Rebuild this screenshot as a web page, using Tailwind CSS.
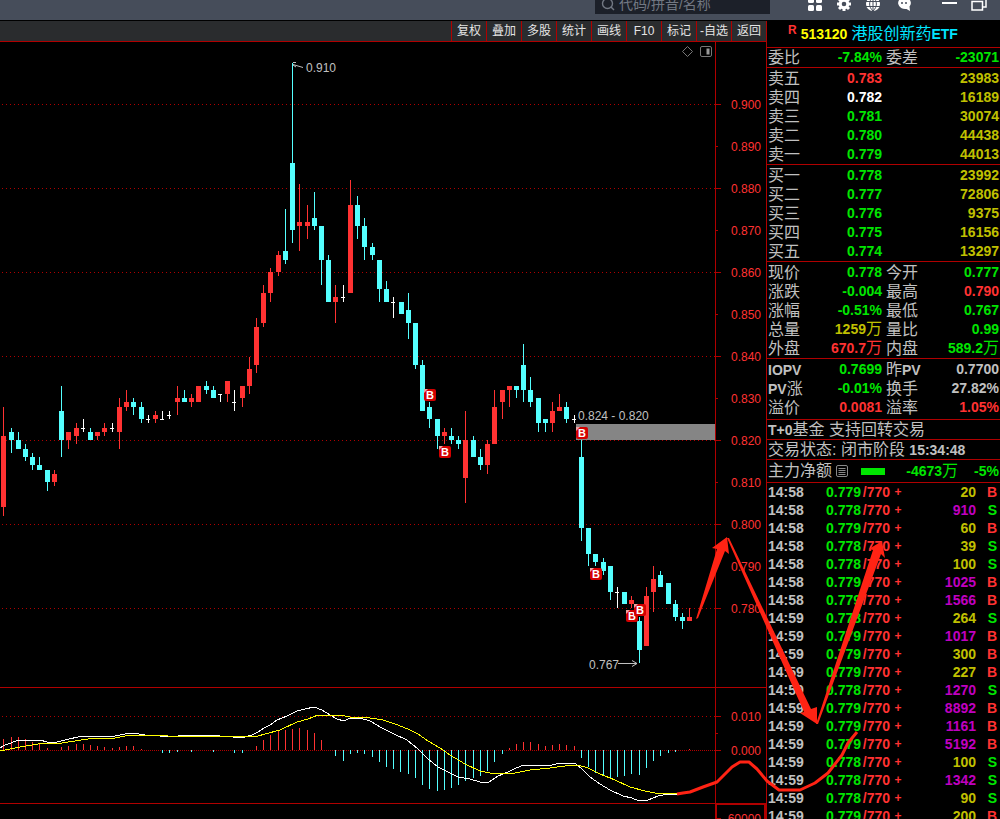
<!DOCTYPE html>
<html lang="zh-CN">
<head>
<meta charset="utf-8">
<title>513120 港股创新药ETF</title>
<script src="https://cdn.jsdelivr.net/npm/@tailwindcss/browser@4"></script>
</head>
<body class="relative flex h-screen flex-col overflow-hidden bg-black font-['Liberation_Sans','Noto_Sans_CJK_SC',sans-serif] text-[#c0c0c0]">

<header class="h-5 shrink-0 overflow-hidden bg-[#464d5a]">
  <div class="-mt-[9px] flex h-[26px] items-center justify-end pr-[13px] text-white">
    <label class="mr-[38px] flex h-[19px] w-[175px] items-center gap-1 bg-[#1c2029] pl-1.5 text-[#727883]">
      <svg class="size-3.5 shrink-0" viewBox="0 0 14 14" fill="none" stroke="currentColor" stroke-width="1.4"><circle cx="6.5" cy="6.5" r="5"/><path d="M10 10l3 3"/></svg>
      <input type="text" aria-label="搜索" placeholder="代码/拼音/名称" class="w-full bg-transparent text-sm outline-none placeholder:text-[#727883]">
    </label>
    <button aria-label="应用" class="mr-[15px]"><svg class="size-3.5" viewBox="0 0 14 14" fill="currentColor"><rect width="6" height="6" rx="1.5"/><rect x="8" width="6" height="6" rx="1.5"/><rect y="8" width="6" height="6" rx="1.5"/><rect x="8" y="8" width="6" height="6" rx="1.5"/></svg></button>
    <button aria-label="设置" class="mr-[15px]"><svg class="size-3.5" viewBox="0 0 14 14"><circle cx="7" cy="7" r="3.8" fill="none" stroke="currentColor" stroke-width="3"/><path stroke="currentColor" stroke-width="3" d="M7 0v2.500M7 11.500V14M0 7h2.500M11.500 7H14M2 2l2 2M10 10l2 2M2 12l2-2M10 4l2-2"/></svg></button>
    <button aria-label="网络" class="mr-[17px]"><svg class="size-3.5" viewBox="0 0 14 14"><circle cx="7" cy="7" r="7" fill="currentColor"/><path d="M0 4.500h14M0 9.500h14M7 0v14M7 0C2.500 4 2.500 10 7 14M7 0c4.500 4 4.500 10 0 14" fill="none" stroke="#464d5a"/></svg></button>
    <button aria-label="消息" class="mr-[31px]"><svg class="size-3.5" viewBox="0 0 14 14"><path d="M7 0a7 6 0 0 1 5.500 9.500L13 14l-3.500-2A7 6 0 1 1 7 0z" fill="currentColor"/><circle cx="5" cy="6" r="1" fill="#464d5a"/><circle cx="9" cy="6" r="1" fill="#464d5a"/></svg></button>
    <button aria-label="最小化" class="mr-3.5"><svg class="h-3.5 w-[15px]" viewBox="0 0 15 14"><rect y="5" width="15" height="2" fill="currentColor"/></svg></button>
    <button aria-label="还原"><svg class="h-3.5 w-4" viewBox="0 0 16 14" fill="none" stroke="currentColor" stroke-width="1.500"><path d="M1 4.500h10.500v8.500H1zM4 3V1h11v9h-3"/></svg></button>
  </div>
</header>

<main class="mt-px flex min-h-0 flex-1">
  <section class="flex min-w-0 flex-1 flex-col">
    <nav class="flex h-[21px] shrink-0 justify-end border-b border-[#b00000] bg-[#2a2c2e] text-xs text-[#e4e4e4]">
      <button class="w-[35px] border-l border-[#b00000]">复权</button>
      <button class="w-[35px] border-l border-[#b00000]">叠加</button>
      <button class="w-[35px] border-l border-[#b00000]">多股</button>
      <button class="w-[35px] border-l border-[#b00000]">统计</button>
      <button class="w-[35px] border-l border-[#b00000]">画线</button>
      <button class="w-[35px] border-l border-[#b00000]">F10</button>
      <button class="w-[35px] border-l border-[#b00000]">标记</button>
      <button class="w-[35px] border-l border-[#b00000] whitespace-nowrap">-自选</button>
      <button class="w-[35px] border-l border-[#b00000]">返回</button>
    </nav>
    <svg id="chart" class="min-h-0 w-full flex-1 text-xs" viewBox="0 42 766 777" preserveAspectRatio="xMinYMin slice" role="img" aria-label="日K线与MACD">
      <g id="grid" shape-rendering="crispEdges"></g>
      <g id="candles" shape-rendering="crispEdges"></g>
      <g id="macd" shape-rendering="crispEdges"></g>
      <g id="marks"></g>
      <g fill="none" stroke="#c0c0c0">
        <path d="M293 62.500h3M293 64.500l10 3M293 65l3 2"/>
        <path d="M618 663.500h19M632 660.500l5 3l-5 3"/>
      </g>
      <g fill="none" stroke="#777">
        <path d="M687.500 46.500l5 5l-5 5l-5-5z"/>
        <rect x="700.500" y="46.500" width="11" height="10" rx="1.500"/>
        <path d="M708 48.500v6" stroke-width="3" stroke="#999"/>
      </g>
    </svg>
  </section>

  <aside class="w-[234px] shrink-0 overflow-hidden whitespace-nowrap border-l border-[#b00000]">
    <h1 class="flex h-[26px] items-center pl-[21px] text-sm font-bold">
      <span class="mb-2 text-xs text-[#ff3232]">R</span>
      <span class="ml-1 text-[#ffff00]">513120</span>
      <span class="ml-1 text-base font-normal text-[#00e5ff]">港股创新药<b class="text-sm">ETF</b></span>
    </h1>
    <div id="quotes"></div>
    <p class="h-5 border-t border-[#b00000] pl-px text-base leading-[19px]"><b class="text-sm">T+0</b>基金 支持回转交易</p>
    <p class="h-5 border-t border-[#b00000] pl-px text-base leading-[19px]">交易状态: 闭市阶段 <b class="text-sm">15:34:48</b></p>
    <div class="flex h-[23px] items-center border-t border-[#b00000] pl-px pr-px text-sm font-bold text-[#00e600]">
      <span class="text-base font-normal text-[#c0c0c0]">主力净额</span>
      <svg class="ml-1 size-3" viewBox="0 0 12 12" fill="none" stroke="#888"><rect x=".5" y=".5" width="11" height="11" rx="1.500"/><path d="M2.500 3.500h7M2.500 5.500h7M2.500 7.500h7M2.500 9.500h7"/></svg>
      <span class="ml-[13px] h-[7px] w-6 bg-[#00e600]"></span>
      <span class="ml-auto">-4673<span class="text-base font-normal leading-none">万</span></span>
      <span class="ml-4">-5%</span>
    </div>
    <div class="border-t border-[#b00000]">
      <table class="w-full table-fixed text-sm font-bold">
        <colgroup><col class="w-[39px]"><col class="w-[55px]"><col class="w-[29px]"><col class="w-[16px]"><col><col class="w-6"></colgroup>
        <tbody id="ticks"></tbody>
      </table>
    </div>
  </aside>
</main>

<!-- Hand-drawn forecast over the chart and the quote panel -->
<svg class="pointer-events-none absolute inset-0 size-full" viewBox="0 0 1000 819" preserveAspectRatio="xMinYMin slice" fill="#ff2314">
  <path d="M696 619L717 549L712 548L727 537L729 554L725 551L698 618z"/>
  <path d="M727 538L804 712L800 713L817 724L817 707L811 709L729 538z"/>
  <path d="M816 724L873 550L869 549L882 541L885 558L881 554L818 724z"/>
  <path d="M677 794L683 793L690 792L703 787L717 782L723 776L732 767L740 762L749 762L757 769L767 781L779 790L800 790L815 783L828 773L842 755L848 743L857 732" fill="none" stroke="#ff2314" stroke-width="3" stroke-linejoin="round"/>
</svg>

<script>
const NS = 'http://www.w3.org/2000/svg';
const byId = id => document.getElementById(id);
function add(parent, tag, attrs, text) {
  const e = document.createElementNS(NS, tag);
  for (const k in attrs) e.setAttribute(k, attrs[k]);
  if (text) e.textContent = text;
  parent.appendChild(e);
}
const RED = '#ff3232', CYAN = '#54ffff', LINE = '#b00000';
const grid = byId('grid'), candles = byId('candles'), macd = byId('macd'), marks = byId('marks');

// Grid, frame and axis
for (const y of [104, 188, 272, 356, 440, 524, 608, 716])
  add(grid, 'path', {d: `M2 ${y}.5H715`, stroke: LINE, 'stroke-dasharray': '1 3'});
add(grid, 'path', {d: 'M0 750.5H715', stroke: LINE, 'stroke-dasharray': '1 1'});
add(grid, 'rect', {x: 715, y: 42, width: 1, height: 777, fill: LINE});
add(grid, 'rect', {x: 0, y: 687, width: 766, height: 1, fill: LINE});
add(grid, 'rect', {x: 0, y: 803, width: 766, height: 1, fill: LINE});
add(grid, 'path', {d: 'M716 819V804H765V819', stroke: LINE, fill: 'none', 'stroke-width': 2});
['0.900','0.890','0.880','0.870','0.860','0.850','0.840','0.830','0.820','0.810','0.800','0.790','0.780'].forEach((t, i) => {
  const y = 104 + i * 42;
  add(grid, 'path', {d: `M716 ${y}.5h${i % 2 ? 2 : 5}`, stroke: LINE});
  add(grid, 'text', {x: 761, y: y + 5, fill: RED, 'text-anchor': 'end'}, t);
});
[[716, '0.010'], [750, '0.000'], [818, '60000']].forEach(([y, t]) => {
  add(grid, 'path', {d: `M716 ${y}.5h5`, stroke: LINE});
  add(grid, 'text', {x: 761, y: y + 5, fill: RED, 'text-anchor': 'end'}, t);
});
add(grid, 'path', {d: 'M716 733.5h2', stroke: LINE});

// x, high, body top, body bottom, low
const data = `3r407,436,507,516 11c428,432,440,453 18c432,440,449,449 25c444,449,457,461 32c453,457,465,470 39c457,465,470,470 47c470,470,482,491 54r470,474,482,486 61c386,411,440,457 68r432,432,440,449 76r423,428,436,444 83w419,428,428,432 90c428,432,440,440 97r432,432,436,440 104r423,428,432,436 112w423,428,428,432 119r398,407,432,449 126r390,402,407,411 133c398,402,407,415 141c402,407,419,423 148w415,419,419,423 155r411,415,419,423 162w411,419,419,420 169w411,415,415,419 177r386,398,402,415 184c390,398,402,402 191r394,398,402,407 198r386,386,402,402 206c381,386,390,394 213c386,390,398,398 220w394,394,394,402 227r381,381,394,402 234w390,402,402,411 242r386,386,398,407 249r357,369,386,394 256r318,327,365,373 263r285,293,323,327 270r268,272,293,302 278r251,255,272,276 285c209,251,260,264 292c63,163,230,243 299r184,222,226,251 307r205,222,226,239 314c192,218,226,230 321c226,226,260,285 328c255,260,302,302 335r285,297,302,323 343w285,297,297,302 350r180,205,293,293 357c196,205,226,239 364c218,226,247,260 372c243,247,255,260 379c260,260,289,302 386c281,289,302,302 393w297,302,302,318 401c302,302,314,314 408c293,310,323,339 415c323,323,365,369 422c360,365,411,411 429c402,407,419,428 437c419,419,436,449 444r428,432,436,444 451c428,436,440,444 458c436,440,444,449 465r411,440,478,503 473c436,440,457,457 480c449,457,465,470 487r440,444,465,474 494r390,407,444,444 502r390,390,402,419 509r386,386,390,407 516c386,386,390,398 523c344,365,390,402 530c377,390,402,407 538c398,398,423,432 545c419,419,423,432 552r402,411,423,432 559r394,407,411,411 566c402,407,419,423 574w415,419,419,423 581c440,457,528,541 588c528,528,554,566 595c554,554,562,566 603c558,562,571,575 610c566,566,592,600 617w587,592,592,608 624c592,592,604,604 631r596,600,604,608 639c617,621,650,663 646r587,596,646,646 653r566,579,592,612 660c571,575,587,587 668c583,583,604,604 675c600,604,617,621 682c613,617,621,629 689r608,617,621,621`;
for (const item of data.split(' ')) {
  const [, x, c, rest] = item.match(/^(\d+)([rcw])(.*)$/);
  const [hi, top, bot, lo] = rest.split(',').map(Number);
  const fill = {r: RED, c: CYAN, w: '#fff'}[c];
  add(candles, 'rect', {x: +x, y: hi, width: 1, height: Math.max(lo - hi, 1), fill});
  add(candles, 'rect', {x: x - 2, y: top, width: c === 'w' ? 4 : 5, height: Math.max(bot - top, 1), fill});
}
add(candles, 'rect', {x: 576, y: 424, width: 139, height: 16, fill: '#858585'});

// MACD histogram: x, end of bar (bars start at the zero line, y 750)
const bars = `3,739 11,737 18,737 25,739 32,742 39,744 47,748 61,747 68,746 76,744 83,744 90,745 97,746 104,747 112,748 119,747 126,746 133,746 141,749 162,752 169,752 177,751 191,751 213,751 234,752 242,752 256,746 263,740 270,735 278,731 285,730 292,729 299,728 307,730 314,733 321,740 335,755 343,760 350,753 357,752 364,753 372,756 379,761 386,766 393,768 400,771 408,773 415,777 422,784 429,788 437,790 444,789 451,787 458,784 465,780 473,777 480,775 487,770 494,761 502,753 509,748 516,744 523,742 530,742 538,744 545,746 552,745 559,744 566,745 574,746 581,757 588,766 595,772 603,775 610,777 617,776 624,775 631,773 639,774 646,767 653,760 660,755 668,752 675,751 689,749`;
for (const b of bars.split(' ')) {
  const [x, y] = b.split(',').map(Number);
  const up = y < 750;
  add(macd, 'rect', {x, y: up ? y : 750, width: 1, height: up ? 750 - y : y - 749, fill: up ? RED : CYAN});
}
add(macd, 'polyline', {fill: 'none', stroke: '#fff', points: '0,748 5,745 11,743 18,740 40,740 47,742 57,742 65,740 82,736 115,736 125,734 133,733 145,735 160,736 170,737 178,736 198,735 210,735 220,736 233,737 245,737 252,735 258,732 264,728 270,725 277,720 287,716 297,711 305,709 314,707 322,710 330,715 337,719 344,721 350,718 360,718 370,721 382,728 394,734 407,740 418,749 428,759 438,767 450,773 458,777 470,779 480,782 489,782 498,776 508,772 516,768 524,765 535,765 548,766 560,763 575,763 582,769 590,777 600,784 610,790 623,796 632,798 639,801 648,800 658,796 668,794 678,794'});
add(macd, 'polyline', {fill: 'none', stroke: '#ff0', points: '0,751 10,749 20,747 32,745 45,743 62,743 75,741 88,739 115,738 125,736 140,735 165,735 168,736 258,736 265,734 280,730 297,722 308,719 318,715 340,715 350,717 370,718 383,720 395,724 408,729 418,734 428,741 440,748 450,755 465,764 480,771 490,773 500,774 515,773 530,770 550,768 565,766 578,765 588,768 600,774 615,780 630,787 645,791 655,793 678,793'});

for (const [x, y] of [[424, 389], [439, 446], [576, 427], [590, 568], [626, 610], [634, 604]]) {
  add(marks, 'rect', {x, y, width: 12, height: 12, rx: 2, fill: '#d40000'});
  add(marks, 'path', {d: `M${x} ${y + 4}V${y}h4z`, fill: '#f0a0a0'});
  add(marks, 'text', {x: x + 6, y: y + 10, fill: '#fff', 'text-anchor': 'middle', 'font-size': 11, 'font-weight': 'bold'}, 'B');
}
[[306, 72, '0.910'], [578, 420, '0.824 - 0.820'], [589, 669, '0.767']].forEach(([x, y, t]) =>
  add(marks, 'text', {x, y, fill: '#c0c0c0'}, t));

// Quote panel
const tone = {r: 'text-[#ff3232]', g: 'text-[#00e600]', y: 'text-[#c0c000]', w: 'text-white', n: 'text-[#c0c0c0]', p: 'text-[#c000c0]'};
const mix = t => t.replace('万', '<span class="text-base font-normal leading-none">万</span>');
const name = t => t.replace(/[A-Z]+/, '<b class="text-sm leading-none">$&</b>');
const blocks = [
  [['委比','g-7.84%','委差','g-23071']],
  [['卖五','r0.783','','y23983'],['卖四','w0.782','','y16189'],['卖三','g0.781','','y30074'],['卖二','g0.780','','y44438'],['卖一','g0.779','','y44013']],
  [['买一','g0.778','','y23992'],['买二','g0.777','','y72806'],['买三','g0.776','','y9375'],['买四','g0.775','','y16156'],['买五','g0.774','','y13297']],
  [['现价','g0.778','今开','g0.777'],['涨跌','g-0.004','最高','r0.790'],['涨幅','g-0.51%','最低','g0.767'],['总量','y1259万','量比','g0.99'],['外盘','r670.7万','内盘','g589.2万']],
  [['IOPV','g0.7699','昨PV','n0.7700'],['PV涨','g-0.01%','换手','n27.82%'],['溢价','r0.0081','溢率','r1.05%']]
];
const pads = ['', 'pt-px', 'pt-px', 'pt-px', 'pt-px pb-0.5'];
byId('quotes').innerHTML = blocks.map((rows, i) => `
  <div class="border-t border-[#b00000] ${pads[i]}">
  <table class="w-full table-fixed text-sm">
    <colgroup><col class="w-[34px]"><col class="w-[81px]"><col class="w-[39px]"><col></colgroup>
    <tbody>${rows.map(([a, b, c, d]) => `
      <tr class="h-[19px] leading-[19px]">
        <th scope="row" class="p-0 pl-px text-left text-base font-normal leading-[19px]">${name(a)}</th>
        <td class="p-0 text-right font-bold ${tone[b[0]]}">${mix(b.slice(1))}</td>
        <th scope="row" class="p-0 pl-1 text-left text-base font-normal leading-[19px]">${name(c)}</th>
        <td class="p-0 pr-px text-right font-bold ${tone[d[0]]}">${mix(d.slice(1))}</td>
      </tr>`).join('')}
    </tbody>
  </table>
  </div>`).join('');

const ticks = [['58',9,20,'B'],['58',8,910,'S'],['58',9,60,'B'],['58',8,39,'S'],['58',8,100,'S'],['58',9,1025,'B'],['58',9,1566,'B'],['59',8,264,'S'],['59',9,1017,'B'],['59',9,300,'B'],['59',9,227,'B'],['59',8,1270,'S'],['59',9,8892,'B'],['59',9,1161,'B'],['59',9,5192,'B'],['59',8,100,'S'],['59',8,1342,'S'],['59',8,90,'S'],['59',9,200,'B']];
byId('ticks').innerHTML = ticks.map(([m, p, v, s]) => `
  <tr class="h-[18px] leading-[18px]">
    <td class="p-0 pl-px">14:${m}</td>
    <td class="p-0 text-right text-[#00e600]">0.77${p}</td>
    <td class="p-0 text-right text-[#ff3232]">/770</td>
    <td class="p-0 text-center text-xs leading-[18px] text-[#ff3232]">+</td>
    <td class="p-0 text-right ${v >= 900 ? tone.p : tone.y}">${v}</td>
    <td class="p-0 pr-[3px] text-right ${s === 'B' ? tone.r : tone.g}">${s}</td>
  </tr>`).join('');
</script>
</body>
</html>
